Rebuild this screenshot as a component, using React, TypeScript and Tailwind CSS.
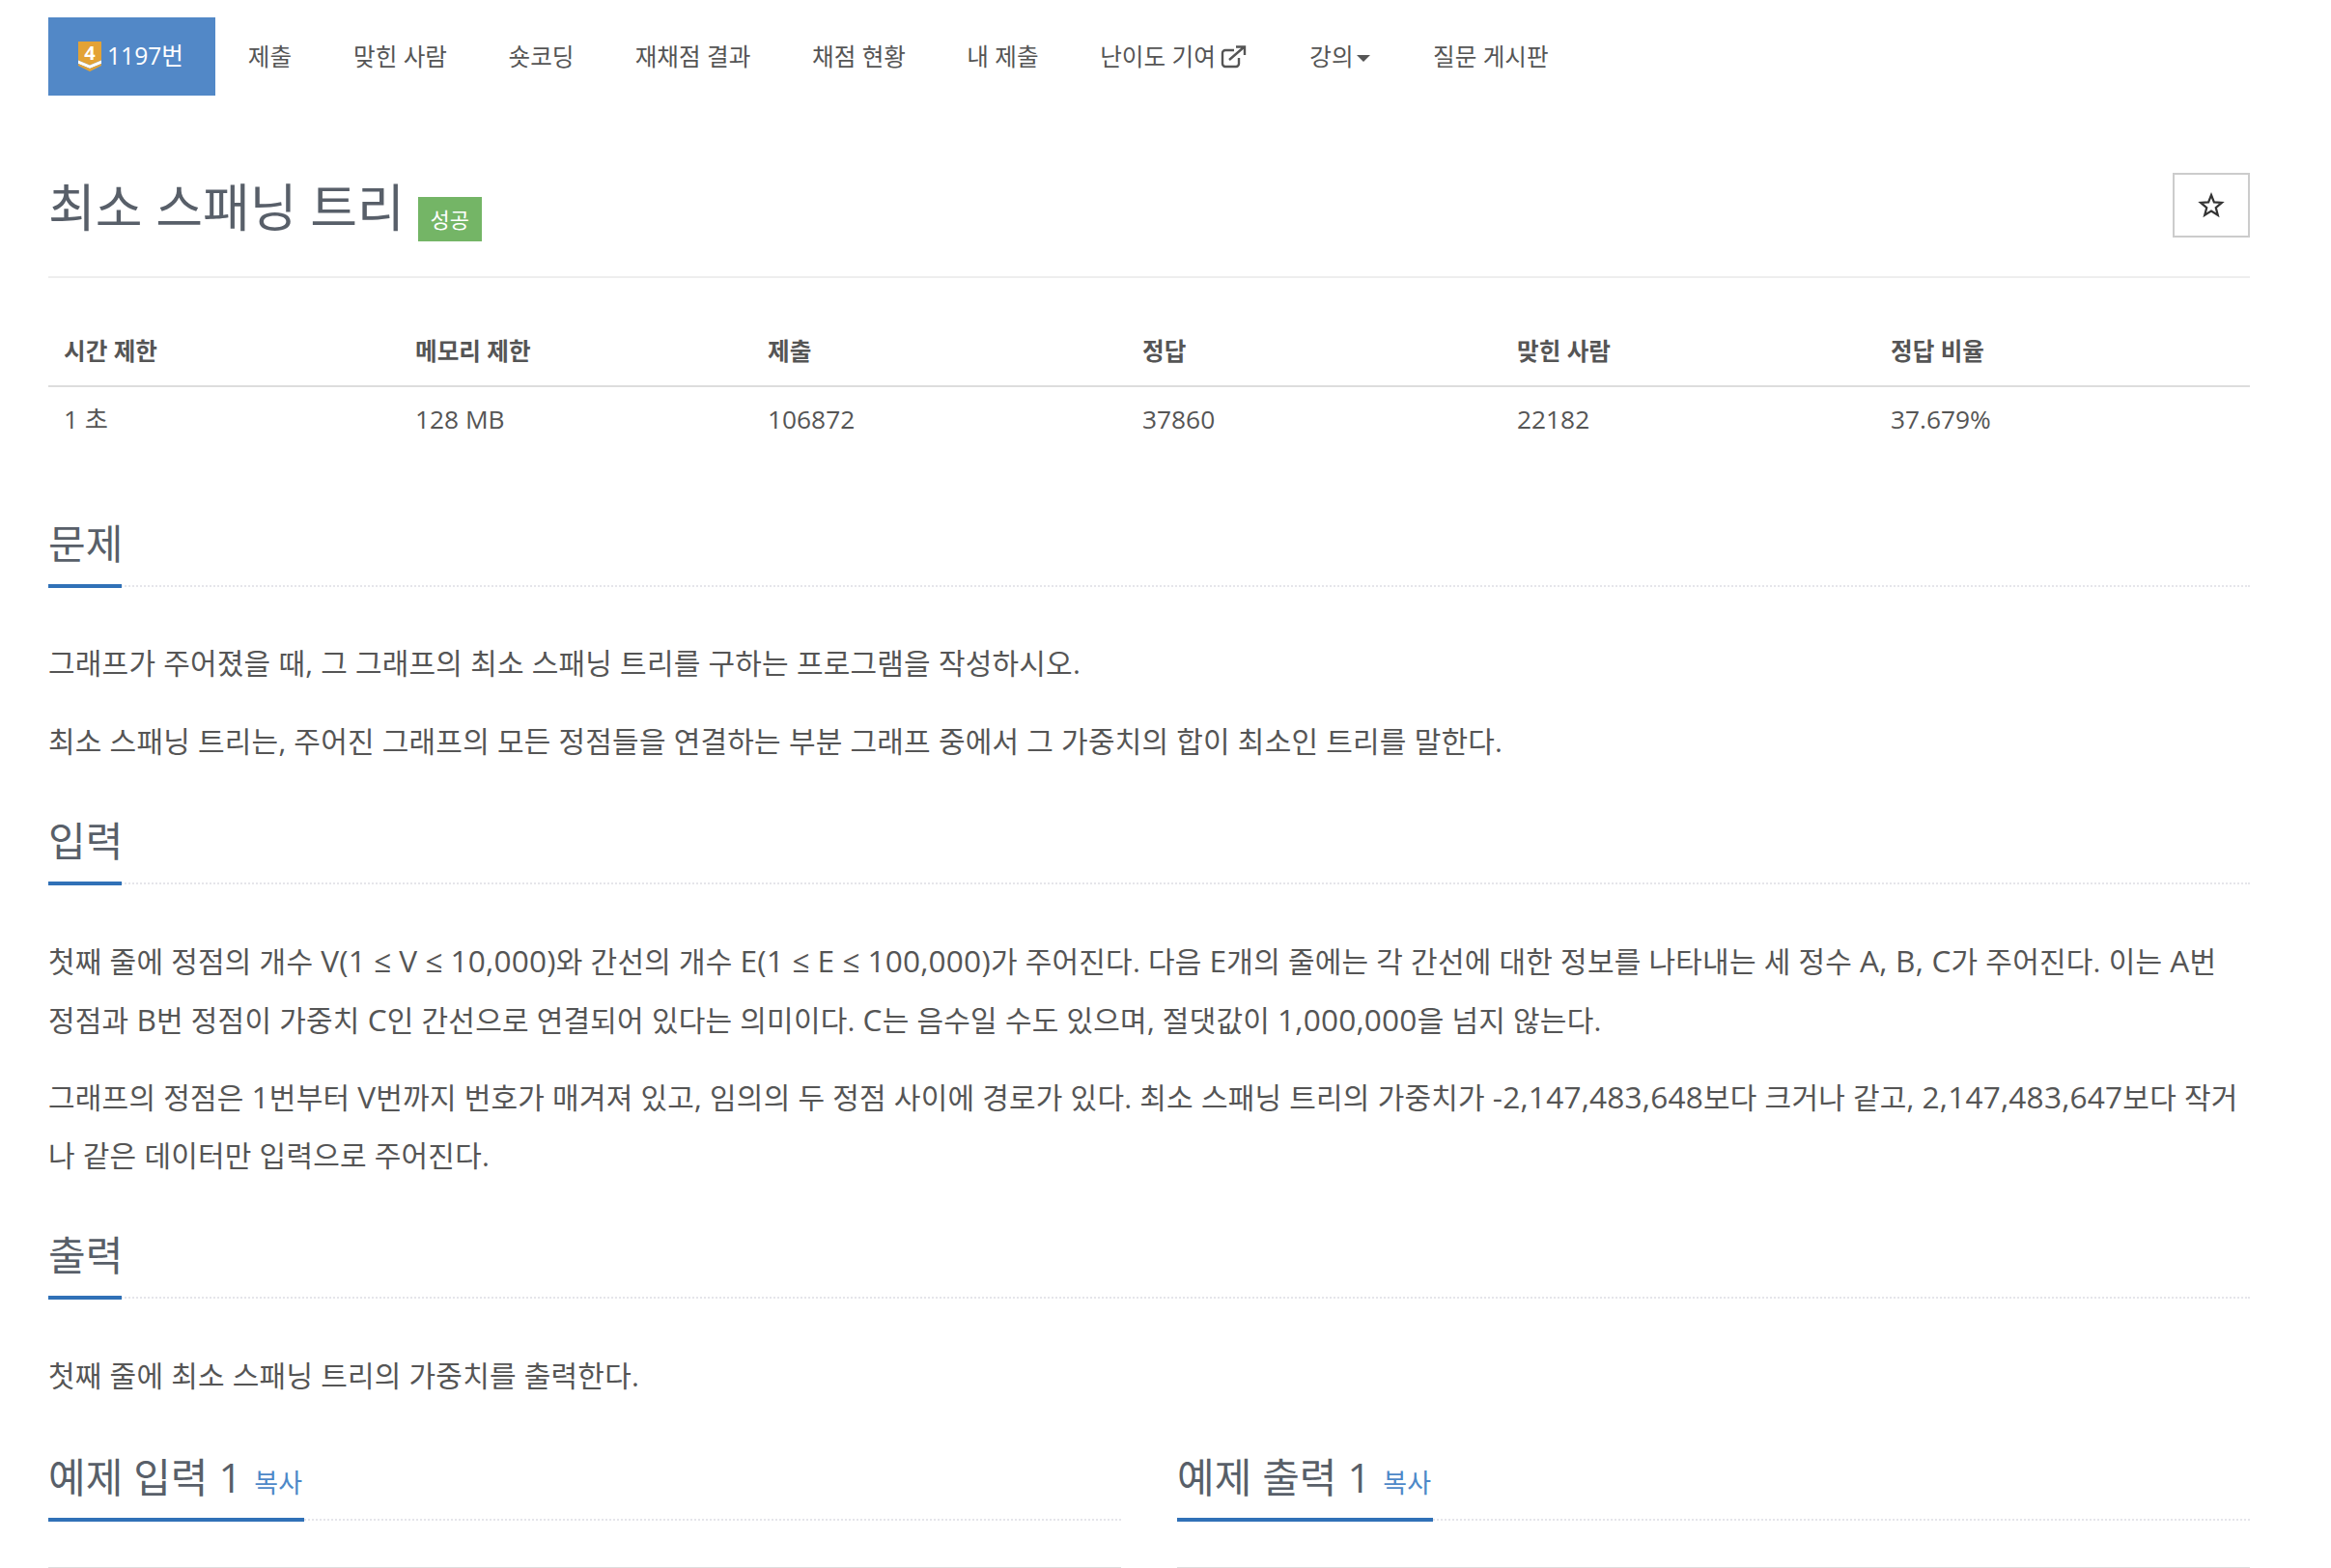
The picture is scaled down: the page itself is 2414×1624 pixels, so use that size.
import React from "react";

const font = { fontFamily: '"Open Sans","Noto Sans CJK KR",sans-serif' };

function Rich({ text }: { text: string }) {
  const parts = text.split(/(A, B, C|(?:[-A-Z0-9(≤)]|,(?=\d))+)/);
  return (
    <>
      {parts.map((p, i) =>
        i % 2 === 1 ? (
          <span key={i} className="text-[31.6px]">{p}</span>
        ) : (
          <React.Fragment key={i}>{p}</React.Fragment>
        )
      )}
    </>
  );
}

function Heading({ children, bar }: { children: React.ReactNode; bar: string }) {
  return (
    <div className="relative border-b-2 border-dotted border-[#e5e5ea] h-[68px]">
      <h2 className="text-[42px] leading-[46px] font-normal text-[#585f69] whitespace-nowrap">{children}</h2>
      <div className={`absolute left-0 bottom-[-3px] h-1 bg-[#3071b7] ${bar}`} />
    </div>
  );
}

const nav = [
  ["제출", "w-[109px]"],
  ["맞힌 사람", "w-[161px]"],
  ["숏코딩", "w-[131px]"],
  ["재채점 결과", "w-[183px]"],
  ["채점 현황", "w-[161px]"],
  ["내 제출", "w-[137px]"],
];

export default function App() {
  return (
    <div style={font} className="h-[1624px] overflow-hidden bg-white text-[#555555] pl-[50px] pr-[84px] pt-[18px]">
      <nav className="flex h-[81px] items-center text-[24.6px]">
        <div className="flex h-full w-[173px] items-center justify-center gap-[6px] bg-[#5288c7] text-white">
          <svg width="24" height="31" viewBox="0 0 24 31" aria-hidden="true" className="-ml-[2px] overflow-visible">
            <path d="M0 0H24V19.5L12 24.5L0 19.5Z" fill="#e3a235" />
            <path d="M0 19.5L12 24.5L24 19.5V23L12 28L0 23Z" fill="#ffffff" />
            <path d="M0 23L12 28L24 23V25L12 31L0 25Z" fill="#e3a235" />
            <text x="12" y="19" textAnchor="middle" fontSize="20" fontWeight="700" fill="#ffffff">4</text>
          </svg>
          <span>1197번</span>
        </div>
        <div className="ml-[2px] flex h-full items-center pt-[2px]">
          {nav.map(([t, w]) => (
            <span key={t} className={`${w} text-center whitespace-nowrap`}>{t}</span>
          ))}
          <span className="w-[216px] flex items-center justify-center gap-[5px] whitespace-nowrap">
            난이도 기여
            <svg width="27" height="24" viewBox="0 0 27 24" fill="none" stroke="#555555" strokeWidth="2.4" aria-hidden="true">
              <path d="M14 5H5A3 3 0 0 0 2 8V19A3 3 0 0 0 5 22H16A3 3 0 0 0 19 19V13" />
              <path d="M9 15L24 2M16 1.5H25V10" />
            </svg>
          </span>
          <span className="w-[129px] flex items-center justify-center gap-[3px]">
            강의
            <span className="mt-[3px] border-x-[7px] border-t-[7px] border-x-transparent border-t-[#555555]" />
          </span>
          <span className="whitespace-nowrap px-[32px]">질문 게시판</span>
        </div>
      </nav>

      <header className="mt-[80px] flex h-[109px] items-start justify-between border-b-2 border-[#eeeeee]">
        <div className="flex items-end">
          <h1 className="text-[53px] leading-[72px] font-normal text-[#585f69]">최소 스패닝 트리</h1>
          <span className="ml-[14px] mb-[1px] flex h-[46px] w-[66px] items-center justify-center bg-[#74b566] text-[22px] text-white">성공</span>
        </div>
        <button className="flex h-[67px] w-[80px] items-center justify-center border-2 border-[#cccccc]">
          <svg width="30" height="30" viewBox="0 0 30 30" fill="none" stroke="#333333" strokeWidth="2.2" strokeMiterlimit="10" aria-hidden="true">
            <polygon points="15,4 17.9,11.45 25.9,11.95 19.75,17.05 21.8,24.8 15,20.5 8.2,24.8 10.25,17.05 4.1,11.95 12.1,11.45" />
          </svg>
        </button>
      </header>

      <table className="mt-[41px] w-full table-fixed text-[26.3px]">
        <thead>
          <tr className="h-[71px] border-b-2 border-[#dddddd] text-left text-[24.6px]">
            <th className="w-[364px] pl-4 font-bold">시간 제한</th>
            <th className="w-[365px] pl-4 font-bold">메모리 제한</th>
            <th className="w-[388px] pl-4 font-bold">제출</th>
            <th className="w-[388px] pl-4 font-bold">정답</th>
            <th className="w-[387px] pl-4 font-bold">맞힌 사람</th>
            <th className="pl-4 font-bold">정답 비율</th>
          </tr>
        </thead>
        <tbody>
          <tr className="h-[68px]">
            <td className="pl-4">1 초</td>
            <td className="pl-4">128 MB</td>
            <td className="pl-4">106872</td>
            <td className="pl-4">37860</td>
            <td className="pl-4">22182</td>
            <td className="pl-4">37.679%</td>
          </tr>
        </tbody>
      </table>

      <section className="mt-[72px]">
        <Heading bar="w-[76px]">문제</Heading>
        <div className="mt-[49px] text-[30px] leading-[60px] tracking-[0.2px]">
          <p>그래프가 주어졌을 때, 그 그래프의 최소 스패닝 트리를 구하는 프로그램을 작성하시오.</p>
          <p className="mt-[21px]">최소 스패닝 트리는, 주어진 그래프의 모든 정점들을 연결하는 부분 그래프 중에서 그 가중치의 합이 최소인 트리를 말한다.</p>
        </div>
      </section>

      <section className="mt-[50px]">
        <Heading bar="w-[76px]">입력</Heading>
        <div className="mt-[49px] text-[30px] leading-[60px] tracking-[0.2px]">
          <p>
            <Rich text="첫째 줄에 정점의 개수 V(1 ≤ V ≤ 10,000)와 간선의 개수 E(1 ≤ E ≤ 100,000)가 주어진다. 다음 E개의 줄에는 각 간선에 대한 정보를 나타내는 세 정수 A, B, C가 주어진다. 이는 A번" />
            <br />
            <Rich text="정점과 B번 정점이 가중치 C인 간선으로 연결되어 있다는 의미이다. C는 음수일 수도 있으며, 절댓값이 1,000,000을 넘지 않는다." />
          </p>
          <p className="mt-[19px]"><Rich text="그래프의 정점은 1번부터 V번까지 번호가 매겨져 있고, 임의의 두 정점 사이에 경로가 있다. 최소 스패닝 트리의 가중치가 -2,147,483,648보다 크거나 같고, 2,147,483,647보다 작거나 같은 데이터만 입력으로 주어진다." /></p>
        </div>
      </section>

      <section className="mt-[50px]">
        <Heading bar="w-[76px]">출력</Heading>
        <div className="mt-[50px] text-[30px] leading-[60px] tracking-[0.2px]">
          <p>첫째 줄에 최소 스패닝 트리의 가중치를 출력한다.</p>
        </div>
      </section>

      <section className="mt-[52px] grid grid-cols-2 gap-x-[58px]">
        {[["예제 입력 1"], ["예제 출력 1"]].map(([t]) => (
          <div key={t}>
            <Heading bar="w-[265px]">
              {t} <a className="ml-[2px] text-[27px] text-[#4d88c8]">복사</a>
            </Heading>
            <div className="mt-[48px] h-[20px] border-t-2 border-[#dddddd]" />
          </div>
        ))}
      </section>
    </div>
  );
}
